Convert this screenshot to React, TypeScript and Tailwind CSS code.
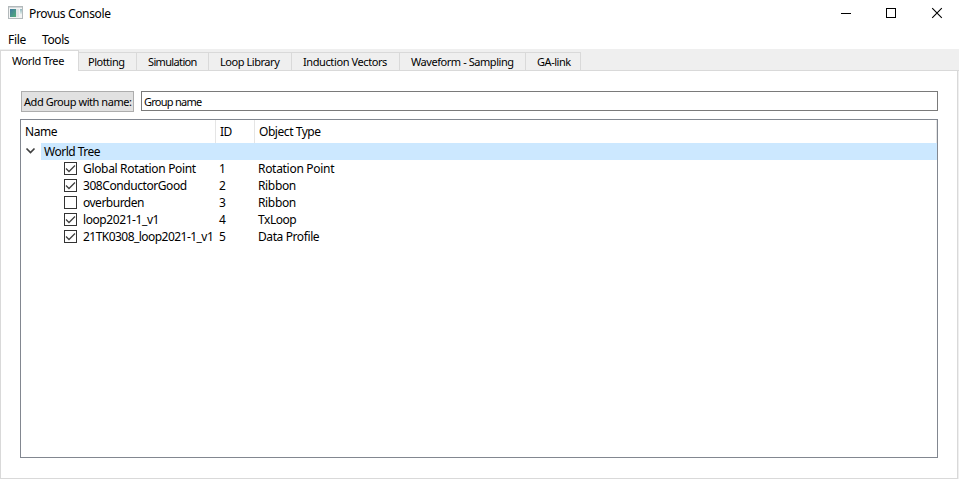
import React from "react";

const tabs = [
  { label: "Plotting", cls: "w-[58px] pl-[9px] tracking-[-0.5px]" },
  { label: "Simulation", cls: "w-[72px] pl-[11px] tracking-[-0.65px]" },
  { label: "Loop Library", cls: "w-[83px] pl-[11px] tracking-[-0.45px]" },
  { label: "Induction Vectors", cls: "w-[108px] pl-[11px] tracking-[-0.4px]" },
  { label: "Waveform - Sampling", cls: "w-[126px] pl-[11px] tracking-[-0.44px]" },
  { label: "GA-link", cls: "w-[55px] pl-[11px] tracking-[-0.45px]" },
];

const rows = [
  { name: "Global Rotation Point", id: "1", type: "Rotation Point", checked: true, track: "tracking-[-0.33px]", typeTrack: "tracking-[-0.3px]" },
  { name: "308ConductorGood", id: "2", type: "Ribbon", checked: true, track: "tracking-[-0.43px]", typeTrack: "tracking-[-0.35px]" },
  { name: "overburden", id: "3", type: "Ribbon", checked: false, track: "tracking-[-0.5px]", typeTrack: "tracking-[-0.35px]" },
  { name: "loop2021-1_v1", id: "4", type: "TxLoop", checked: true, track: "tracking-[-0.42px]", typeTrack: "tracking-[-0.45px]" },
  { name: "21TK0308_loop2021-1_v1", id: "5", type: "Data Profile", checked: true, track: "tracking-[-0.54px]", typeTrack: "tracking-[-0.4px]" },
];

function AppIcon() {
  return (
    <svg className="mt-[6px] ml-2 block" width="15" height="13" shapeRendering="crispEdges">
      <defs>
        <linearGradient id="screen" x1="0" y1="0" x2="1" y2="1">
          <stop offset="0" stopColor="#3f78a0" />
          <stop offset="1" stopColor="#54ad78" />
        </linearGradient>
        <linearGradient id="side" x1="0" y1="0" x2="0" y2="1">
          <stop offset="0" stopColor="#8fb6bd" />
          <stop offset="1" stopColor="#e6efec" />
        </linearGradient>
      </defs>
      <rect width="15" height="13" fill="#b3b9bb" />
      <rect x="1" y="1" width="13" height="1" fill="#d3d7d9" />
      <rect x="1" y="2" width="13" height="10" fill="#f3f4f4" />
      <rect x="2" y="3" width="6" height="8" fill="url(#screen)" />
      <rect x="8" y="3" width="3" height="8" fill="#e1e5e7" />
      <rect x="12" y="3" width="2" height="5" fill="url(#side)" />
    </svg>
  );
}

function CheckBox({ checked }: { checked: boolean }) {
  return (
    <svg className="block" width="13" height="13">
      <rect x="0.5" y="0.5" width="12" height="12" fill="#fff" stroke="#333" />
      {checked && <path d="M2 6.5L5 9.5L11 3.5" fill="none" stroke="#404040" strokeWidth="1.3" />}
    </svg>
  );
}

export default function App() {
  return (
    <div className="flex h-[479px] w-[959px] flex-col overflow-hidden bg-white font-['Noto_Sans',sans-serif] text-[12px] leading-[17px] whitespace-nowrap text-black">
      <header className="flex h-[30px] shrink-0">
        <AppIcon />
        <span className="mt-[5px] ml-[6px] flex-1 tracking-[-0.35px]">Provus Console</span>
        <svg width="136" height="26" className="block" stroke="#000" fill="none">
          <path d="M18 13.5H28M63.5 8.5h9v9h-9z" shapeRendering="crispEdges" />
          <path d="M109.2 8.2L118.8 17.8M118.8 8.2L109.2 17.8" strokeWidth="1.1" />
        </svg>
      </header>
      <nav className="flex h-[19px] shrink-0 pt-px pl-2">
        <span className="w-[34px] tracking-[-0.3px]">File</span>
        <span className="tracking-[-0.4px]">Tools</span>
      </nav>
      <div className="flex h-[22px] shrink-0 items-end bg-[#efefef] pt-px text-[11px]">
        <div className="h-[21px] w-[79px] border border-b-0 border-[#d9d9d9] bg-white pt-px pl-[11px] tracking-[-0.4px]">World Tree</div>
        <div className="flex h-[19px] flex-1 border-b border-[#d9d9d9]">
          {tabs.map((t) => (
            <div key={t.label} className={`h-[18px] border-t border-r border-[#d9d9d9] ${t.cls}`}>{t.label}</div>
          ))}
        </div>
      </div>
      <div className="flex flex-1 bg-[#efefef] pr-px">
        <main className="flex flex-1 flex-col border-x border-b border-[#d9d9d9] bg-white pt-5 pr-[19px] pb-5 pl-[19px]">
          <div className="flex h-[28px] gap-[7px] pl-px text-[11px]">
            <button className="h-[21px] w-[113px] border border-[#adadad] bg-[#e1e1e1] pb-px pl-[2px] text-left leading-[17px] tracking-[-0.44px]">Add Group with name:</button>
            <div className="h-5 flex-1 border border-[#7a7a7a] pt-px pl-[2px] tracking-[-0.75px]">Group name</div>
          </div>
          <section className="flex-1 border border-[#828790]">
            <div className="flex h-[23px] leading-[23px] tracking-[-0.45px]">
              <span className="w-[195px] border-r border-[#e5e5e5] pl-1">Name</span>
              <span className="w-[39px] border-r border-[#e5e5e5] pl-1">ID</span>
              <span className="flex-1 border-r border-[#e5e5e5] pl-1">Object Type</span>
            </div>
            <div className="flex h-[17px]">
              <svg width="20" height="17" className="block">
                <path d="M5.5 5.5L9.5 9.5L13.5 5.5" fill="none" stroke="#404040" strokeWidth="1.7" />
              </svg>
              <div className="flex-1 bg-[#cce8ff] pl-[3px] tracking-[-0.5px]">World Tree</div>
            </div>
            {rows.map((r) => (
              <div key={r.id} className="flex h-[17px] pl-[43px]">
                <div className="w-[19px] pt-[2px]"><CheckBox checked={r.checked} /></div>
                <span className={`w-[136px] ${r.track}`}>{r.name}</span>
                <span className="w-[39px]">{r.id}</span>
                <span className={r.typeTrack}>{r.type}</span>
              </div>
            ))}
          </section>
        </main>
      </div>
    </div>
  );
}
